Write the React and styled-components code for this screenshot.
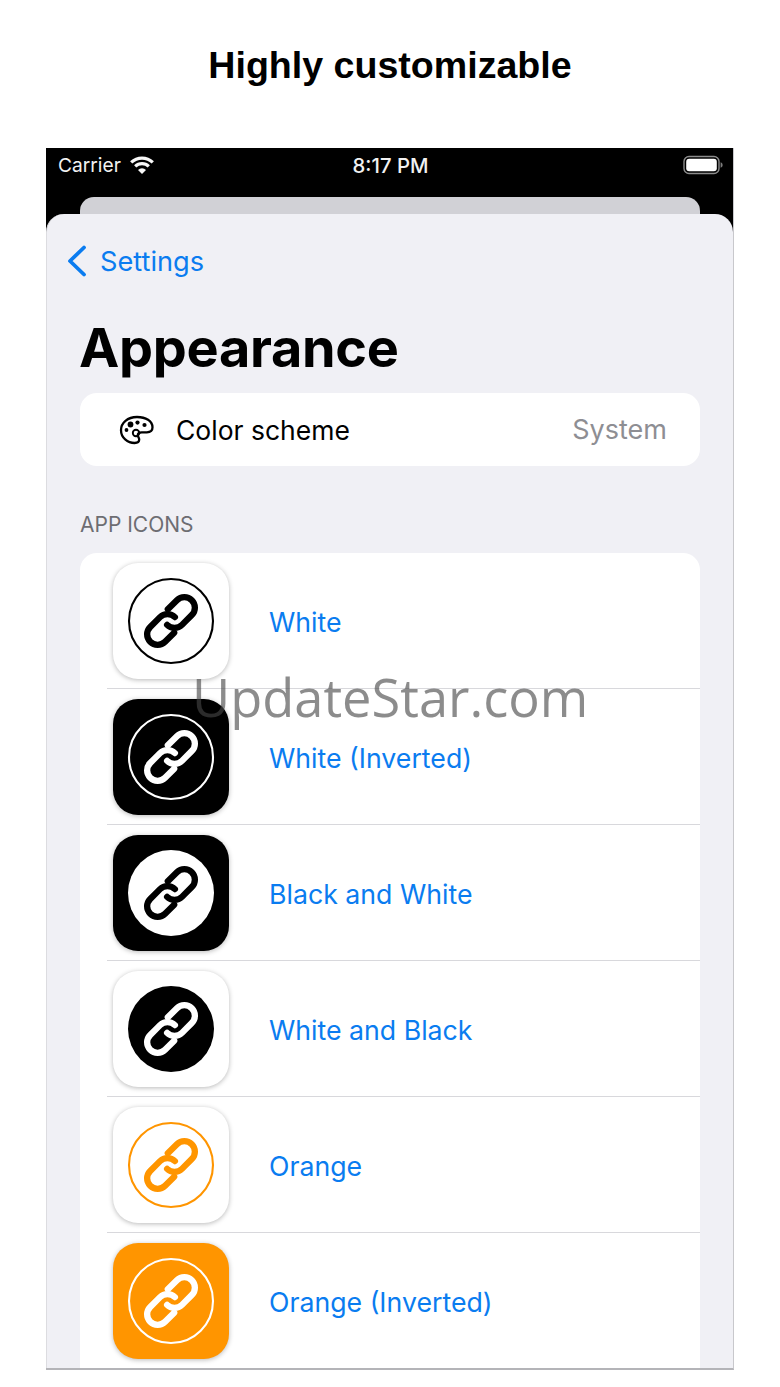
import React from "react";
import styled, { createGlobalStyle } from "styled-components";

const Global = createGlobalStyle`
  html, body { margin: 0; padding: 0; background: #fff; }
  body { font-family: Inter, "Liberation Sans", sans-serif; }
`;

const Page = styled.div`
  position: relative;
  width: 780px;
  height: 1387px;
  overflow: hidden;
  background: #fff;
`;

const Title = styled.h1`
  margin: 0;
  height: 148px;
  padding-top: 42px;
  box-sizing: border-box;
  text-align: center;
  font: 700 37.6px/46px "Liberation Sans", sans-serif;
  color: #000;
`;

const Phone = styled.div`
  width: 688px;
  height: 1222px;
  margin-left: 46px;
  box-sizing: border-box;
  background: #000;
  border-right: 1px solid #c8c8cc;
  border-bottom: 2px solid #b4b4b8;
  overflow: hidden;
`;

const StatusBar = styled.div`
  height: 49px;
  display: grid;
  grid-template-columns: 1fr auto 1fr;
  align-items: center;
  padding: 0 10px 15px 12px;
  box-sizing: border-box;
  color: #f2f2f2;
  font-size: 20.3px;
  font-weight: 500;
`;

const StatusLeft = styled.div`
  display: flex;
  align-items: center;
  gap: 9px;
  font-weight: 400;
  font-size: 19.2px;
`;

const StatusRight = styled.div`
  display: flex;
  justify-content: flex-end;
`;

const BackCard = styled.div`
  height: 17px;
  margin: 0 33px 0 34px;
  background: #d1d1d6;
  border-radius: 14px 14px 0 0;
`;

const Sheet = styled.div`
  height: 1160px;
  background: #f0f0f5;
  border-left: 1px solid #dcdce0;
  border-radius: 18px 18px 0 0;
  padding: 0 33px;
  overflow: hidden;
`;

const Back = styled.div`
  display: flex;
  align-items: center;
  gap: 12px;
  height: 94px;
  margin-left: -14px;
  color: #0a7cf0;
  font-size: 27.2px;
`;

const Heading = styled.h2`
  margin: 0 0 0 -1px;
  height: 85px;
  font-size: 54px;
  font-weight: 700;
  line-height: 80px;
  color: #000;
  letter-spacing: -0.3px;
`;

const SchemeRow = styled.div`
  display: flex;
  align-items: center;
  height: 73px;
  padding: 0 33px 0 39px;
  box-sizing: border-box;
  background: #fff;
  border-radius: 17px;
  font-size: 27px;
  color: #000;
`;

const SchemeLabel = styled.span`
  margin-left: 21px;
  flex: 1;
  font-size: 26.5px;
`;

const SchemeValue = styled.span`
  color: #8e8e93;
`;

const SectionHeader = styled.div`
  height: 87px;
  box-sizing: border-box;
  padding: 47px 0 0 0;
  font-size: 21px;
  line-height: 24px;
  color: #6d6d72;
`;

const List = styled.div`
  background: #fff;
  border-radius: 17px 17px 0 0;
  padding-left: 27px;
`;

const Row = styled.div`
  display: flex;
  align-items: center;
  height: 136px;
  box-sizing: border-box;
  padding-left: 6px;
  border-bottom: 1px solid #d8d8dc;
  color: #0a7cf0;
  font-size: 26.7px;
`;

const RowLabel = styled.span`
  padding-top: 3px;
`;

const IconTile = styled.div`
  width: 116px;
  height: 116px;
  flex: none;
  margin-right: 40px;
  display: flex;
  align-items: center;
  justify-content: center;
  border-radius: 25px;
  background: ${(p) => p.$bg};
  box-shadow: 0 1px 5px rgba(0, 0, 0, 0.28);
`;

const Watermark = styled.div`
  position: absolute;
  left: 192px;
  top: 663px;
  font: 400 52.4px/68px "Open Sans", sans-serif;
  color: rgba(70, 70, 70, 0.62);
  white-space: nowrap;
`;

const LinkGlyph = ({ color }) => (
  <g transform="rotate(-45 43 43)" fill="none" stroke={color} strokeWidth="6.3" strokeLinecap="round">
    <g transform="translate(43 43)">
      <path d="M-6 10.500H-18.900A10.500 10.500 0 0 1 -18.900 -10.500H-5A10.500 10.500 0 0 1 5.500 0" />
      <path d="M6 -10.500H18.900A10.500 10.500 0 0 1 18.900 10.500H5A10.500 10.500 0 0 1 -5.500 0" />
    </g>
  </g>
);

const AppIcon = ({ bg, ring, disc, link }) => (
  <IconTile $bg={bg}>
    <svg width="88" height="88" viewBox="-1 -1 88 88">
      {disc ? (
        <circle cx="43" cy="43" r="43" fill={disc} />
      ) : (
        <circle cx="43" cy="43" r="42" fill="none" stroke={ring} strokeWidth="2.100" />
      )}
      <LinkGlyph color={link} />
    </svg>
  </IconTile>
);

const Wifi = () => (
  <svg width="24" height="18" viewBox="0 0 24 18" fill="none" stroke="#f8f8f8" strokeWidth="3.200">
    <path d="M1.200 6.400a15.600 15.600 0 0 1 21.600 0" />
    <path d="M5.200 10.400a9.800 9.800 0 0 1 13.600 0" />
    <path d="M12 18l-4-4.100a5.800 5.800 0 0 1 8 0z" fill="#f8f8f8" stroke="none" />
  </svg>
);

const Battery = () => (
  <svg width="40" height="20" viewBox="0 0 40 20">
    <rect x="1" y="1.500" width="35" height="17" rx="5" fill="none" stroke="#8c8c8c" strokeWidth="1.400" />
    <rect x="3.200" y="3.700" width="30.600" height="12.600" rx="3" fill="#fff" />
    <path d="M37.600 7.200c1.400.4 2 1.500 2 2.800s-.6 2.400-2 2.800z" fill="#7c7c7c" />
  </svg>
);

const Chevron = () => (
  <svg width="22" height="32" viewBox="0 0 22 32" fill="none" stroke="#0a7cf0" strokeWidth="3.800" strokeLinecap="round" strokeLinejoin="round">
    <path d="M18 2.500L4 16l14 13.500" />
  </svg>
);

const Palette = () => (
  <svg width="36" height="30" viewBox="0 0 36 30">
    <path
      d="M18 2C8.600 2 2 7.800 2 15.200 2 22.600 8.600 28 15.600 28c3 0 4.600-1.400 4.600-3.400 0-1.800-1.400-2.700-1.400-4.300 0-1.900 1.600-3 3.900-3h5.200c3.600 0 5.600-1.800 5.600-5C33.500 6 26.800 2 18 2z"
      fill="none"
      stroke="#000"
      strokeWidth="2.300"
    />
    <circle cx="11.500" cy="9.500" r="2.900" fill="#000" />
    <circle cx="18.500" cy="7.600" r="2.100" fill="#000" />
    <circle cx="25.500" cy="10" r="2.100" fill="#000" />
    <circle cx="7.500" cy="15" r="1.900" fill="#000" />
    <circle cx="17" cy="18" r="3.200" fill="none" stroke="#000" strokeWidth="1.900" />
  </svg>
);

const rows = [
  { label: "White", bg: "#fff", ring: "#000", link: "#000" },
  { label: "White (Inverted)", bg: "#000", ring: "#fff", link: "#fff" },
  { label: "Black and White", bg: "#000", disc: "#fff", link: "#000" },
  { label: "White and Black", bg: "#fff", disc: "#000", link: "#fff" },
  { label: "Orange", bg: "#fff", ring: "#ff9500", link: "#ff9500" },
  { label: "Orange (Inverted)", bg: "#ff9500", ring: "#fff", link: "#fff" },
];

export default function App() {
  return (
    <Page>
      <Global />
      <Title>Highly customizable</Title>
      <Phone>
        <StatusBar>
          <StatusLeft>
            Carrier
            <Wifi />
          </StatusLeft>
          <span>8:17 PM</span>
          <StatusRight>
            <Battery />
          </StatusRight>
        </StatusBar>
        <BackCard />
        <Sheet>
          <Back>
            <Chevron />
            Settings
          </Back>
          <Heading>Appearance</Heading>
          <SchemeRow>
            <Palette />
            <SchemeLabel>Color scheme</SchemeLabel>
            <SchemeValue>System</SchemeValue>
          </SchemeRow>
          <SectionHeader>APP ICONS</SectionHeader>
          <List>
            {rows.map((r) => (
              <Row key={r.label}>
                <AppIcon bg={r.bg} ring={r.ring} disc={r.disc} link={r.link} />
                <RowLabel>{r.label}</RowLabel>
              </Row>
            ))}
          </List>
        </Sheet>
      </Phone>
      <Watermark>UpdateStar.com</Watermark>
    </Page>
  );
}
